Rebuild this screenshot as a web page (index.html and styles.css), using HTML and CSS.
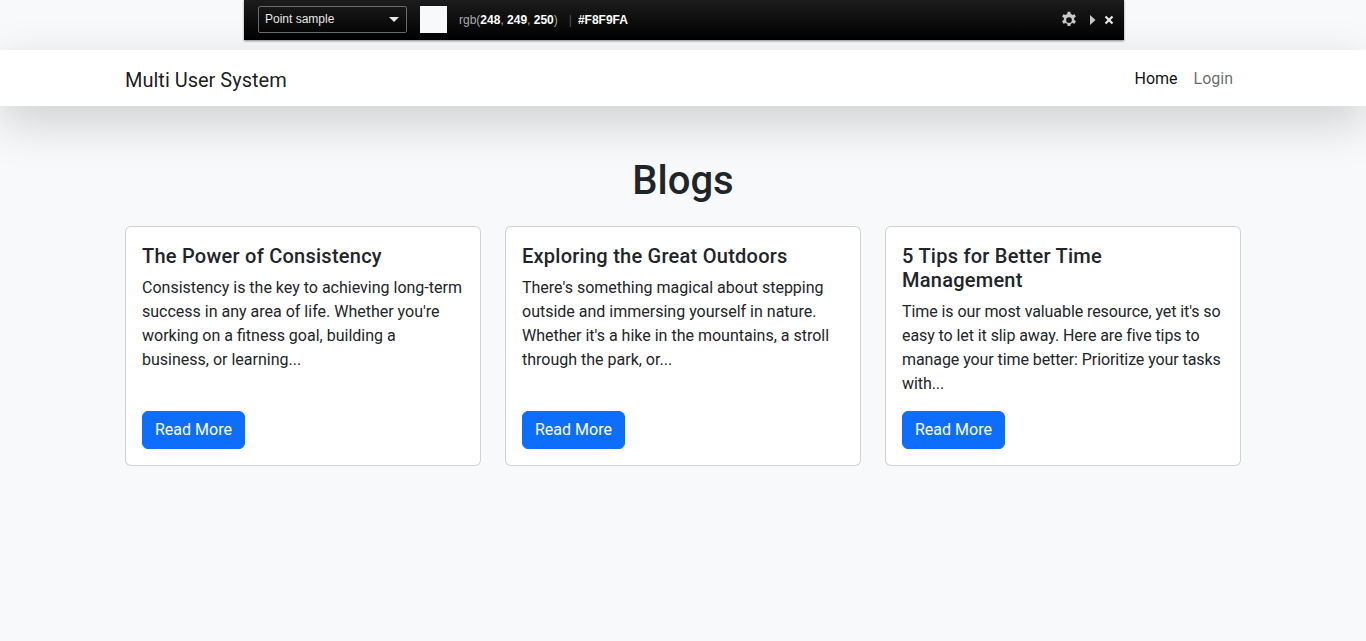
FILE: index.html
```html
<!DOCTYPE html>
<html lang="en">
<head>
<meta charset="utf-8">
<title>Blogs</title>
<link rel="stylesheet" href="styles.css">
</head>
<body>
<div class="picker">
  <div class="picker-select">
    <span>Point sample</span>
    <span class="caret"></span>
  </div>
  <div class="picker-swatch"></div>
  <div class="picker-value"><span class="dim">rgb(</span><b>248</b><span class="dim">, </span><b>249</b><span class="dim">, </span><b>250</b><span class="dim">)</span><span class="sep">|</span><b>#F8F9FA</b></div>
  <div class="picker-tools">
    <svg class="gear" width="18" height="18" viewBox="0 0 24 24"><path fill="#c8c8c8" fill-rule="evenodd" d="M10.2 1h3.6l.6 3.1a8 8 0 0 1 2 1.1l3-1 1.8 3.1-2.4 2.1a8 8 0 0 1 0 2.3l2.4 2.1-1.8 3.1-3-1a8 8 0 0 1-2 1.1l-.6 3.1h-3.6l-.6-3.1a8 8 0 0 1-2-1.1l-3 1-1.8-3.1 2.4-2.1a8 8 0 0 1 0-2.3L2.8 7.3l1.8-3.1 3 1a8 8 0 0 1 2-1.1zM12 8.2a3.8 3.8 0 1 0 0 7.6 3.8 3.8 0 0 0 0-7.6z"/></svg>
    <svg class="play" width="7" height="10" viewBox="0 0 7 10"><path fill="#c8c8c8" d="M1 0l5.5 5L1 10z"/></svg>
    <svg class="close" width="10" height="10" viewBox="0 0 10 10"><path stroke="#e8e8e8" stroke-width="2.2" d="M1.5 1.5l7 7M8.5 1.5l-7 7"/></svg>
  </div>
</div>

<div class="top-gap"></div>
<nav class="navbar">
  <div class="container nav-inner">
    <a class="brand" href="#">Multi User System</a>
    <ul class="nav-links">
      <li><a class="nav-link active" href="#">Home</a></li>
      <li><a class="nav-link" href="#">Login</a></li>
    </ul>
  </div>
</nav>

<main class="container">
  <h1 class="page-title">Blogs</h1>
  <div class="grid">
    <div class="card">
      <h5 class="card-title">The Power of Consistency</h5>
      <p class="card-text">Consistency is the key to achieving long-term success in any area of life. Whether you're working on a fitness goal, building a business, or learning...</p>
      <a class="btn" href="#">Read More</a>
    </div>
    <div class="card">
      <h5 class="card-title">Exploring the Great Outdoors</h5>
      <p class="card-text">There's something magical about stepping outside and immersing yourself in nature. Whether it's a hike in the mountains, a stroll through the park, or...</p>
      <a class="btn" href="#">Read More</a>
    </div>
    <div class="card">
      <h5 class="card-title">5 Tips for Better Time Management</h5>
      <p class="card-text card-text-tight">Time is our most valuable resource, yet it's so easy to let it slip away. Here are five tips to manage your time better: Prioritize your tasks with...</p>
      <a class="btn" href="#">Read More</a>
    </div>
  </div>
</main>
</body>
</html>
```
FILE: styles.css
```css
* { box-sizing: border-box; }
html, body { margin: 0; }
body {
  background: #f8f9fa;
  color: #212529;
  font-family: Roboto, "Liberation Sans", sans-serif;
  font-size: 16px;
  line-height: 1.5;
}
a { text-decoration: none; }

.container {
  max-width: 1140px;
  margin: 0 auto;
  padding: 0 12px;
}

.top-gap { height: 50px; }

.navbar {
  position: relative;
  background: #fff;
  box-shadow: 0 16px 48px rgba(0, 0, 0, .175);
  padding: 8px 0;
}
.nav-inner {
  display: flex;
  align-items: center;
  justify-content: space-between;
}
.brand {
  color: rgba(0, 0, 0, .9);
  font-size: 20px;
  padding: 7px 0 3px;
  line-height: 30px;
}
.nav-links {
  display: flex;
  list-style: none;
  margin: 0;
  padding: 0;
}
.nav-link {
  display: block;
  padding: 9px 8px 7px;
  color: rgba(0, 0, 0, .6);
  line-height: 24px;
}
.nav-link.active { color: rgba(0, 0, 0, .95); }

.page-title {
  text-align: center;
  font-size: 40px;
  font-weight: 500;
  line-height: 1.2;
  margin: 51px 0 21px;
}

.grid {
  display: grid;
  grid-template-columns: repeat(3, 1fr);
  gap: 24px;
}
.card {
  background: #fff;
  border: 1px solid rgba(0, 0, 0, .175);
  border-radius: 6px;
  padding: 17px 16px 16px;
  display: flex;
  flex-direction: column;
  align-items: flex-start;
}
.card-title {
  font-size: 20px;
  font-weight: 500;
  line-height: 1.2;
  letter-spacing: .25px;
  margin: 0 0 8px;
}
.card-text { margin: 0 0 15px; }
.card-text-tight { letter-spacing: -.08px; }
.btn {
  margin-top: auto;
  display: inline-block;
  background: #0d6efd;
  color: #fff;
  border-radius: 6px;
  padding: 6px 12px;
  line-height: 24px;
  border: 1px solid #0d6efd;
}

/* colour picker overlay */
.picker {
  position: absolute;
  top: 0;
  left: 244px;
  width: 880px;
  height: 40px;
  z-index: 10;
  display: flex;
  align-items: center;
  padding: 0 10px 1px 14px;
  background: linear-gradient(#1c1c1c, #000);
  box-shadow: 0 1px 2px rgba(0, 0, 0, .45);
  font-family: "Liberation Sans", Arial, sans-serif;
  font-size: 12px;
  color: #fff;
}
.picker-select {
  width: 149px;
  height: 27px;
  border: 1px solid #6a6a6a;
  border-radius: 2px;
  display: flex;
  align-items: center;
  justify-content: space-between;
  padding: 0 6px 1px;
  color: #e6e6e6;
}
.caret {
  width: 0;
  height: 0;
  border-left: 5px solid transparent;
  border-right: 5px solid transparent;
  border-top: 5px solid #e6e6e6;
  margin: 1px 1px 0 0;
}
.picker-swatch {
  width: 27px;
  height: 27px;
  margin-left: 13px;
  background: #f8f9fa;
}
.picker-value {
  margin-left: 12px;
  white-space: pre;
  color: #fff;
}
.picker-value .dim { color: #aaa; }
.picker-value b { font-weight: 700; }
.picker-value .sep { color: #555; margin: 0 6px 0 11px; }
.picker-tools {
  margin-left: auto;
  display: flex;
  align-items: center;
}
.picker-tools .gear { margin-right: 11px; }
.picker-tools .play { margin-right: 8px; }
```
